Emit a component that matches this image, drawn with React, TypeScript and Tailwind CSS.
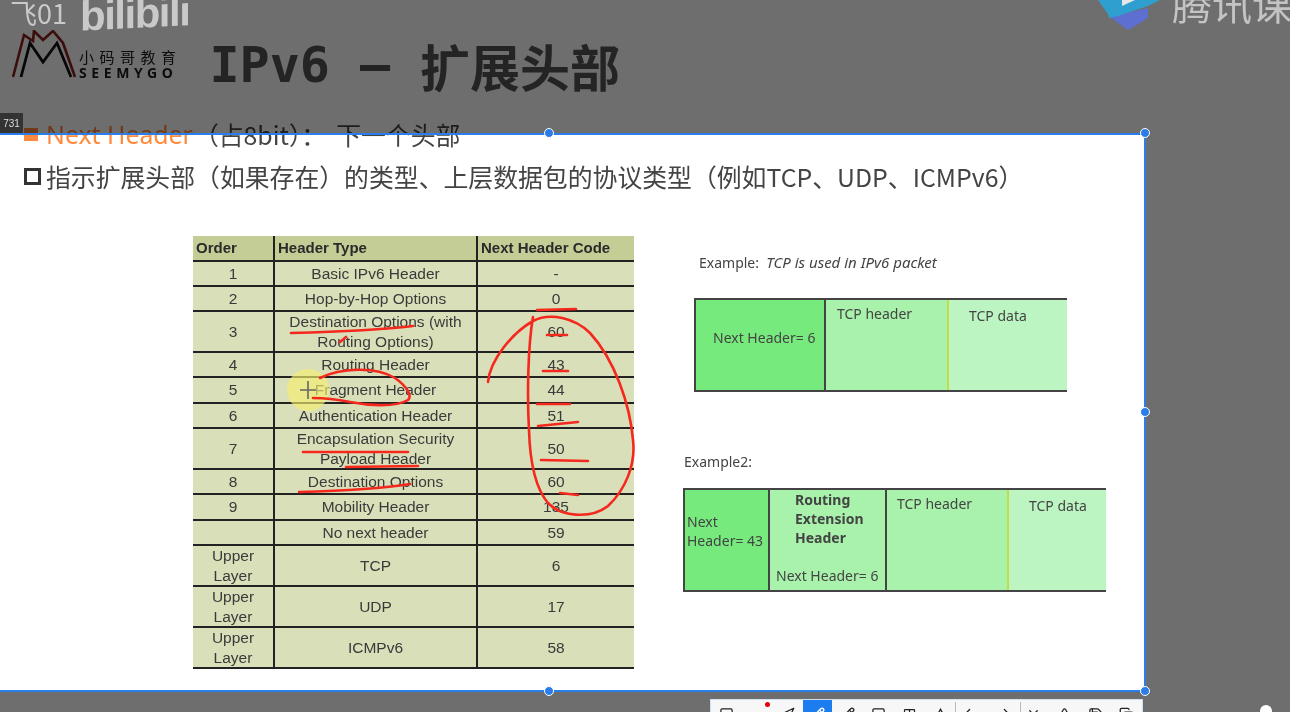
import { Square, MoreHorizontal, Pencil, Type, Droplet, Undo2, Redo2, X, Triangle, Save, Copy, Navigation } from "lucide-react"

const rows = [
  { h: "h-[25px]", order: "1", type: "Basic IPv6 Header", code: "-" },
  { h: "h-[25px]", order: "2", type: "Hop-by-Hop Options", code: "0" },
  { h: "h-[41px]", order: "3", type: "Destination Options (with Routing Options)", code: "60" },
  { h: "h-[25px]", order: "4", type: "Routing Header", code: "43" },
  { h: "h-[26px]", order: "5", type: "Fragment Header", code: "44" },
  { h: "h-[25px]", order: "6", type: "Authentication Header", code: "51" },
  { h: "h-[41px]", order: "7", type: "Encapsulation Security Payload Header", code: "50" },
  { h: "h-[25px]", order: "8", type: "Destination Options", code: "60" },
  { h: "h-[26px]", order: "9", type: "Mobility Header", code: "135" },
  { h: "h-[25px]", order: "", type: "No next header", code: "59" },
  { h: "h-[41px]", order: "Upper Layer", type: "TCP", code: "6" },
  { h: "h-[41px]", order: "Upper Layer", type: "UDP", code: "17" },
  { h: "h-[41px]", order: "Upper Layer", type: "ICMPv6", code: "58" },
]

function HeaderTable() {
  return (
    <table className="w-[441px] table-fixed border-collapse bg-[#d9e0b9] text-[15.5px] leading-[19.5px] text-[#3a3a3a] font-['Liberation_Sans',sans-serif]">
      <thead>
        <tr className="h-[25px] bg-[#c4cd95] text-left text-[15px] font-bold text-[#2a2a2a]">
          <th className="w-[81px] border-r-2 border-b-2 border-[#222] pl-[3px]">Order</th>
          <th className="w-[203px] border-r-2 border-b-2 border-[#222] pl-[3px]">Header Type</th>
          <th className="border-b-2 border-[#222] pl-[3px]">Next Header Code</th>
        </tr>
      </thead>
      <tbody>
        {rows.map((r, i) => (
          <tr key={i} className={r.h}>
            <td className="border-r-2 border-b-2 border-[#222] px-4 text-center">{r.order}</td>
            <td className="border-r-2 border-b-2 border-[#222] px-[6px] text-center">{r.type}</td>
            <td className="border-b-2 border-[#222] text-center">{r.code}</td>
          </tr>
        ))}
      </tbody>
    </table>
  )
}

function Packets() {
  return (
    <div className="flex flex-col pt-[17px] text-[14px] leading-[19px] text-[#444] font-['Noto_Sans',sans-serif]">
      <p className="ml-[17px] text-[14px]">
        Example:&nbsp; <em className="text-[15px]">TCP is used in IPv6 packet</em>
      </p>
      <div className="mt-[26px] ml-[12px] flex h-[94px] w-[373px] border-y-2 border-[#444]">
        <div className="w-[132px] border-x-2 border-[#444] bg-[#77ea7d] pt-[28px] pl-[17px] whitespace-nowrap">Next Header= 6</div>
        <div className="w-[123px] border-r-2 border-[#c2dc4a] bg-[#a8f2ab] pt-[4px] pl-[11px]">TCP header</div>
        <div className="flex-1 bg-[#bcf5c2] pt-[6px] pl-[20px]">TCP data</div>
      </div>
      <p className="mt-[60px] ml-[2px] text-[14px]">Example2:</p>
      <div className="mt-[17px] ml-[1px] flex h-[104px] w-[423px] border-y-2 border-[#444]">
        <div className="w-[87px] border-x-2 border-[#444] bg-[#77ea7d] pt-[22px] pl-[2px]">Next<br />Header= 43</div>
        <div className="flex w-[117px] flex-col border-r-2 border-[#444] bg-[#a8f2ab]">
          <span className="pl-[25px] font-bold">Routing<br />Extension<br />Header</span>
          <span className="mt-[19px] pl-[6px] whitespace-nowrap">Next Header= 6</span>
        </div>
        <div className="w-[122px] border-r-2 border-[#c2dc4a] bg-[#a8f2ab] pt-[4px] pl-[10px]">TCP header</div>
        <div className="flex-1 bg-[#bcf5c2] pt-[6px] pl-[20px]">TCP data</div>
      </div>
    </div>
  )
}

function Logo() {
  return (
    <div className="flex items-end">
      <svg width="66" height="50" viewBox="0 0 66 50" fill="none">
        <path d="M1 47 L12 5 L21 11 L22 1 L31 10 L41 1 L51 13 L63 47" stroke="#8a1f1a" strokeWidth="2.6" />
        <path d="M9 47 L18 13 L31 32 L45 13 L59 47" stroke="#111" strokeWidth="2.8" />
      </svg>
      <div className="ml-[1px] flex flex-col leading-none font-['Noto_Sans_CJK_SC',sans-serif] text-[#1c1c1c]">
        <span className="text-[15px] tracking-[5.5px] whitespace-nowrap">小码哥教育</span>
        <span className="mt-[2px] text-[14px] font-bold tracking-[4.6px] font-['Noto_Sans',sans-serif]">SEEMYGO</span>
      </div>
    </div>
  )
}

// hand drawn red marks, page coordinates
const marks = [
  "M537 310 L576 309",
  "M291 333 C330 332 380 330 413 326",
  "M340 342 L346 337",
  "M547 335 L567 335",
  "M543 371 L568 371",
  "M537 404 L570 404",
  "M538 426 L578 422",
  "M541 460 L588 461",
  "M303 452 L408 452",
  "M346 467 L418 466",
  "M299 492 C340 491 380 489 410 484",
  "M560 493 L578 495",
  "M320 378 C340 368 375 366 395 378 C405 385 413 395 408 400 C395 408 365 405 350 402 C335 399 325 398 313 398",
  "M533 317 C528 345 527 395 529 430 C530 465 537 490 548 503 C560 516 590 520 608 506 C625 490 636 465 633 440 C630 405 615 360 590 333 C575 318 550 312 533 321 C512 333 490 360 488 382",
]

function Marks() {
  return (
    <svg className="pointer-events-none absolute top-0 left-0" width="1290" height="712" fill="none">
      <circle cx="308" cy="390" r="21" fill="#f5ee70" fillOpacity="0.65" />
      {marks.map((d, i) => (
        <path key={i} d={d} stroke="#f5281e" strokeWidth="2.6" strokeLinecap="round" />
      ))}
      <path d="M300 390 H316 M308 381 V399" stroke="#666" strokeWidth="1.6" />
    </svg>
  )
}

function Handle({ className }: { className: string }) {
  return <div className={`absolute h-[10px] w-[10px] rounded-full border border-white bg-[#2b7de9] ${className}`} />
}

function Toolbar() {
  const left = [Square, MoreHorizontal, Navigation]
  const right = [Pencil, Square, Type, Droplet, Undo2, Redo2, X, Triangle, Save, Copy]
  return (
    <div className="absolute top-[699px] left-[710px] flex h-[30px] w-[433px] items-center border border-[#cfe0f5] bg-[#f7f7f7] text-[#222]">
      <div className="flex w-[92px] items-center">
        {left.map((Icon, i) => (
          <span key={i} className="flex w-[31px] justify-center"><Icon size={15} strokeWidth={2} /></span>
        ))}
      </div>
      <div className="flex h-full w-[29px] items-center justify-center bg-[#1c7cf0] text-white">
        <Pencil size={15} strokeWidth={2.2} />
      </div>
      <div className="flex flex-1 items-center">
        {right.map((Icon, i) => (
          <span key={i} className="flex w-[31px] justify-center"><Icon size={15} strokeWidth={2} /></span>
        ))}
      </div>
      <div className="absolute top-[2px] left-[54px] h-[5px] w-[5px] rounded-full bg-red-600" />
      <div className="absolute top-[2px] left-[244px] h-[12px] w-px bg-[#bbb]" />
      <div className="absolute top-[2px] left-[309px] h-[12px] w-px bg-[#bbb]" />
    </div>
  )
}

export default function App() {
  return (
    <div className="relative h-[712px] w-[1290px] overflow-hidden bg-white blur-[0.4px]">
      <header className="flex h-[113px] items-start pt-[30px] pl-[12px]">
        <Logo />
        <h1 className="ml-[28px] flex items-center text-[50px] leading-[70px] font-bold whitespace-nowrap text-[#555] font-['Noto_Sans_CJK_SC',sans-serif]">
          <span className="font-['DejaVu_Sans_Mono',monospace]">IPv6</span>
          <span className="ml-[30px] font-['DejaVu_Sans_Mono',monospace]">–</span>
          <span className="ml-[30px]">扩展头部</span>
        </h1>
      </header>

      <div className="pl-[24px] text-[24.85px] leading-[42px] text-[#444] font-['Noto_Sans_CJK_SC',sans-serif]">
        <p className="flex items-center">
          <span className="mr-[8px] h-[13px] w-[14px] bg-[#ff8a3d]" />
          <span className="text-[#ff8a3d] font-['Noto_Sans',sans-serif]">Next Header</span>
          <span className="ml-[1px]">（占8bit）：</span>
          <span className="ml-[10px]">下一个头部</span>
        </p>
        <p className="flex items-center whitespace-nowrap">
          <span className="mr-[5px] h-[17px] w-[17px] border-[3px] border-[#333]" />
          指示扩展头部（如果存在）的类型、上层数据包的协议类型（例如TCP、UDP、ICMPv6）
        </p>
      </div>

      <div className="mt-[39px] flex pl-[193px]">
        <HeaderTable />
        <div className="ml-[48px]">
          <Packets />
        </div>
      </div>

      <Marks />

      {/* dimmed area outside the capture selection */}
      <div className="absolute inset-x-0 top-0 h-[134px] bg-black/[0.57]" />
      <div className="absolute top-[134px] right-0 bottom-0 left-[1145px] bg-black/[0.57]" />
      <div className="absolute top-[691px] right-[145px] bottom-0 left-0 bg-black/[0.57]" />

      {/* video watermarks */}
      <div className="absolute top-[-18px] left-[10px] flex items-center text-[#c9c9c9] whitespace-nowrap">
        <span className="text-[27px] font-['Noto_Sans_CJK_SC',sans-serif]">飞01</span>
        <span className="ml-[13px] -skew-y-3 text-[42px] font-bold tracking-[-1.5px] font-['Liberation_Sans',sans-serif]">bilibili</span>
      </div>
      <div className="absolute top-[-20px] left-[1098px] flex items-start">
        <svg width="64" height="52" viewBox="0 0 64 52">
          <path d="M12 37 L30 50 L50 38 L50 28 Z" fill="#5d6fd0" />
          <path d="M0 20 L10 34 L11 38 L20 36 L50 26 L62 20 Z" fill="#2f9fd0" />
          <path d="M24 20 L37 20 L24 26 Z" fill="#e6e6e6" />
        </svg>
        <span className="ml-[10px] mt-[3px] text-[40px] leading-none whitespace-nowrap text-[#c4c4c4] font-['Noto_Sans_CJK_SC',sans-serif]">腾讯课</span>
      </div>

      <div className="absolute top-[113px] left-0 flex h-[20px] w-[23px] items-center justify-center bg-[#333] text-[10px] text-[#ddd] font-['Liberation_Sans',sans-serif]">731</div>

      {/* selection frame */}
      <div className="absolute top-[133px] left-[-2px] h-[559px] w-[1148px] border-2 border-[#2b7de9]" />
      <Handle className="top-[128px] left-[544px]" />
      <Handle className="top-[128px] left-[1140px]" />
      <Handle className="top-[407px] left-[1140px]" />
      <Handle className="top-[686px] left-[1140px]" />
      <Handle className="top-[686px] left-[544px]" />
      <Toolbar />
      <div className="absolute top-[705px] left-[1260px] h-[14px] w-[12px] rounded-full bg-white" />
    </div>
  )
}
